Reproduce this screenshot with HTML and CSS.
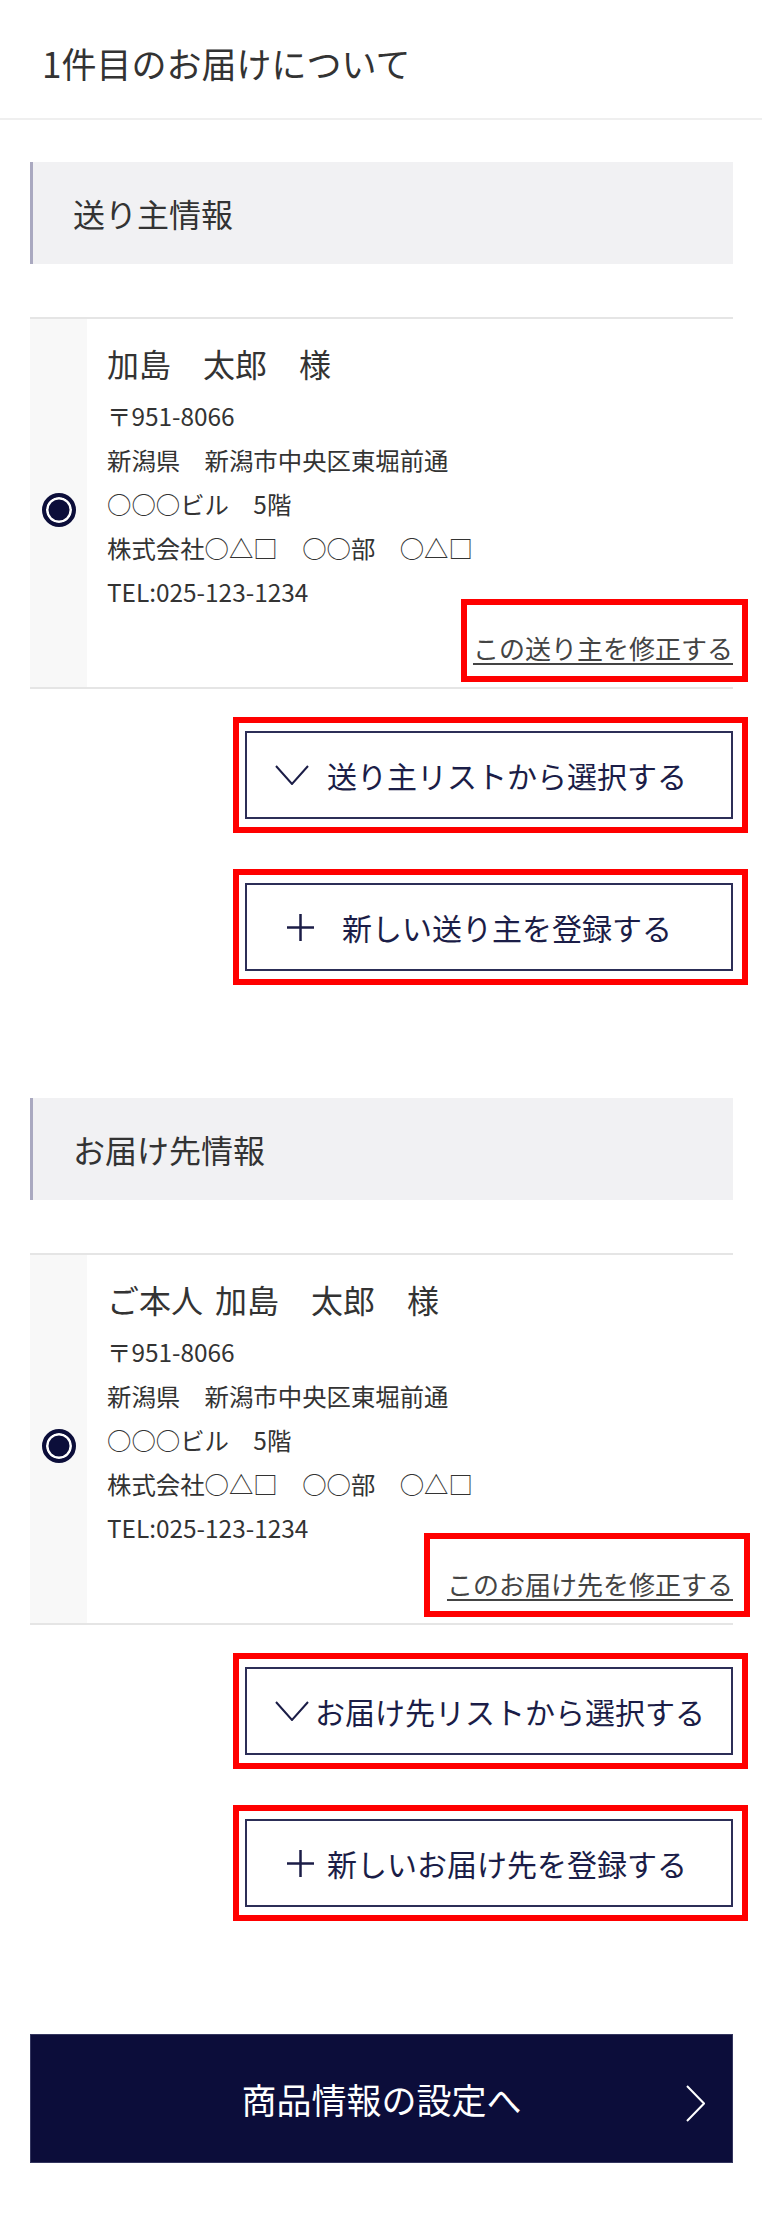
FILE: index.html
```html
<!DOCTYPE html>
<html lang="ja">
<head>
<meta charset="utf-8">
<title>1件目のお届けについて</title>
<link rel="stylesheet" href="styles.css">
</head>
<body>
<header class="page-title">1件目のお届けについて</header>
<main class="content">
  <section class="block">
    <h2 class="sec-head">送り主情報</h2>
    <div class="card">
      <div class="card-select"><span class="radio"></span></div>
      <div class="card-body">
        <p class="name">加島　太郎　様</p>
        <ul class="addr">
          <li>〒951-8066</li>
          <li>新潟県　新潟市中央区東堀前通</li>
          <li>○○○ビル　5階</li>
          <li>株式会社○△□　○○部　○△□</li>
          <li>TEL:025-123-1234</li>
        </ul>
        <div class="edit-row"><a class="edit mark mark-edit-a" href="#">この送り主を修正する</a></div>
      </div>
    </div>
    <div class="actions">
      <button class="btn mark mark-btn" type="button">
        <span class="btn-icon"><svg class="ico-down" width="34" height="20" viewBox="0 0 34 20"><polyline points="1,1 17,19 33,1" fill="none" stroke="currentColor" stroke-width="2"/></svg></span>
        <span class="btn-label">送り主リストから選択する</span>
      </button>
      <button class="btn mark mark-btn" type="button">
        <span class="btn-icon"><svg class="ico-plus" width="27" height="27" viewBox="0 0 27 27"><path d="M13.5 0V27M0 13.5H27" fill="none" stroke="currentColor" stroke-width="2.5"/></svg></span>
        <span class="btn-label">新しい送り主を登録する</span>
      </button>
    </div>
  </section>

  <section class="block">
    <h2 class="sec-head">お届け先情報</h2>
    <div class="card">
      <div class="card-select"><span class="radio"></span></div>
      <div class="card-body">
        <p class="name"><span class="self">ご本人</span>加島　太郎　様</p>
        <ul class="addr">
          <li>〒951-8066</li>
          <li>新潟県　新潟市中央区東堀前通</li>
          <li>○○○ビル　5階</li>
          <li>株式会社○△□　○○部　○△□</li>
          <li>TEL:025-123-1234</li>
        </ul>
        <div class="edit-row"><a class="edit mark mark-edit-b" href="#">このお届け先を修正する</a></div>
      </div>
    </div>
    <div class="actions">
      <button class="btn mark mark-btn" type="button">
        <span class="btn-icon"><svg class="ico-down" width="34" height="20" viewBox="0 0 34 20"><polyline points="1,1 17,19 33,1" fill="none" stroke="currentColor" stroke-width="2"/></svg></span>
        <span class="btn-label">お届け先リストから選択する</span>
      </button>
      <button class="btn mark mark-btn" type="button">
        <span class="btn-icon"><svg class="ico-plus" width="27" height="27" viewBox="0 0 27 27"><path d="M13.5 0V27M0 13.5H27" fill="none" stroke="currentColor" stroke-width="2.5"/></svg></span>
        <span class="btn-label">新しいお届け先を登録する</span>
      </button>
    </div>
  </section>

  <button class="next" type="button">
    <span class="next-label">商品情報の設定へ</span>
    <svg class="next-arrow" width="19" height="37" viewBox="0 0 19 37"><polyline points="1,1 18,18.5 1,36" fill="none" stroke="#fff" stroke-width="2"/></svg>
  </button>
</main>
</body>
</html>
```

FILE: styles.css
```css
* {
  box-sizing: border-box;
  margin: 0;
  padding: 0;
}

html, body {
  background: #fff;
}

body {
  width: 762px;
  font-family: "Noto Sans CJK JP", "Noto Sans", sans-serif;
  color: #333;
  font-weight: 400;
}

.page-title {
  height: 120px;
  padding: 39px 0 0 42px;
  font-size: 35px;
  line-height: 48px;
  border-bottom: 2px solid #efefef;
}

.content {
  padding: 0 29px 55px 30px;
}

.block {
  margin-top: 42px;
}

.block + .block {
  margin-top: 127px;
}

.sec-head {
  height: 102px;
  display: flex;
  align-items: center;
  padding-left: 40px;
  margin-bottom: 53px;
  background: #f1f1f3;
  border-left: 3px solid #aaa9c0;
  font-size: 32px;
  font-weight: 400;
  line-height: 1;
}

.card {
  display: flex;
  border-top: 2px solid #e5e5e5;
  border-bottom: 2px solid #e5e5e5;
}

.card-select {
  width: 57px;
  flex: none;
  background: #f8f8f8;
  display: flex;
  align-items: center;
  justify-content: center;
}

.radio {
  width: 34px;
  height: 34px;
  margin-top: 14px;
  border-radius: 50%;
  border: 4.5px solid #0c0e3a;
  background: #0c0e3a;
  box-shadow: inset 0 0 0 2.5px #fff;
}

.card-body {
  flex: 1;
  padding: 22px 0 21px 20px;
}

.name {
  font-size: 32px;
  line-height: 44px;
  height: 44px;
  margin-bottom: 9px;
}

.self {
  margin-right: 12px;
}

.addr {
  list-style: none;
  font-size: 24.4px;
}

.addr li {
  height: 44px;
  line-height: 44px;
}

.edit-row {
  height: 36px;
  margin-top: 16px;
  display: flex;
  justify-content: flex-end;
  font-size: 26px;
  line-height: 36px;
}

.edit {
  display: block;
  height: 36px;
  color: #444;
  text-decoration: underline;
  text-decoration-thickness: 1.5px;
  text-underline-offset: 4px;
}

.actions {
  margin-top: 42px;
  display: flex;
  flex-direction: column;
  align-items: flex-end;
  gap: 64px;
}

.btn {
  width: 488px;
  height: 88px;
  display: flex;
  align-items: center;
  padding: 0 32px 0 28px;
  background: #fff;
  border: 2px solid #2c2e57;
  color: #1b1d47;
  font-family: inherit;
  font-size: 30px;
  line-height: 1;
  cursor: pointer;
}

.btn-icon {
  width: 40px;
  flex: none;
  display: flex;
  align-items: center;
}

.ico-plus {
  margin-left: 12px;
}

.btn-label {
  flex: 1;
  text-align: center;
  white-space: nowrap;
}

.mark {
  position: relative;
}

.mark::after {
  content: "";
  position: absolute;
  border: 6px solid #ff0000;
  pointer-events: none;
}

.mark-btn::after {
  top: -16px;
  right: -17px;
  bottom: -16px;
  left: -14px;
}

.mark-edit-a::after {
  top: -31px;
  right: -15px;
  bottom: -16px;
  left: -12px;
}

.mark-edit-b::after {
  top: -33px;
  right: -17px;
  bottom: -15px;
  left: -23px;
}

.next {
  width: 100%;
  height: 129px;
  margin-top: 127px;
  display: grid;
  grid-template-columns: 1fr auto 1fr;
  align-items: center;
  background: #0c0d3a;
  border: 1px solid #34365f;
  color: #fff;
  font-family: inherit;
  font-size: 35px;
  line-height: 1;
  cursor: pointer;
}

.next-label {
  grid-column: 2;
}

.next-arrow {
  grid-column: 3;
  justify-self: end;
  margin-right: 27px;
  margin-top: 10px;
}
```
